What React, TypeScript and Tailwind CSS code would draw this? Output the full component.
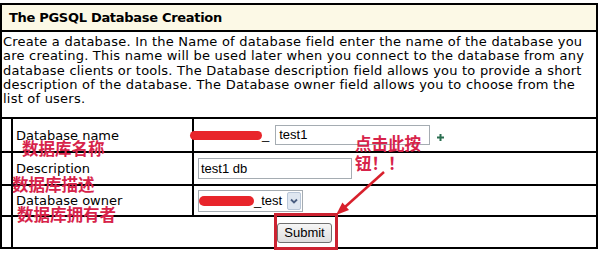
import React from "react";

const verdana = { fontFamily: '"DejaVu Sans", Verdana, sans-serif' };
const arial = { fontFamily: '"Liberation Sans", Arial, sans-serif' };
const cjk = { fontFamily: '"Noto Sans CJK SC", sans-serif' };

function Plus() {
  return (
    <svg width="7" height="7" viewBox="0 0 7 7" className="ml-[7px] mt-[4px]">
      <rect x="2.5" y="0" width="2" height="7" fill="#2a6e50" />
      <rect x="0" y="2.5" width="7" height="2" fill="#2a6e50" />
    </svg>
  );
}

export default function App() {
  return (
    <div className="relative w-[602px] h-[257px] bg-white overflow-hidden text-black">
      <div className="mt-[3px] w-[598px] border-2 border-black" style={verdana}>
        <div className="h-[27px] border-b-2 border-black bg-[#fcf9e6] flex items-center pl-[7px] text-[13px] font-bold tracking-[-0.3px]">
          The PGSQL Database Creation
        </div>
        <div className="h-[87px] border-b-2 border-black pl-px pt-[3px] text-[13px] leading-[14.3px] tracking-[0.22px] whitespace-nowrap">
          Create a database. In the Name of database field enter the name of the database you
          <br />
          are creating. This name will be used later when you connect to the database from any
          <br />
          database clients or tools. The Database description field allows you to provide a short
          <br />
          description of the database. The Database owner field allows you to choose from the
          <br />
          list of users.
        </div>

        <div className="flex h-[34px] border-b-2 border-black">
          <div className="w-[11px] shrink-0 border-r-2 border-black" />
          <div className="w-[181px] shrink-0 border-r-2 border-black flex items-center pl-[3px] pt-[2px] text-[13px]">
            Database name
          </div>
          <div className="flex-1 flex items-center" style={arial}>
            <span className="-ml-[4px] w-[72px] h-[9px] rounded-full bg-[#e8252b] inline-block" />
            <span className="text-[13px]">_</span>
            <div className="ml-[6px] w-[155px] h-[20px] border border-[#a5acb2] flex items-center pl-[3px] text-[13px]">
              test1
            </div>
            <Plus />
          </div>
        </div>

        <div className="flex h-[33px] border-b-2 border-black">
          <div className="w-[11px] shrink-0 border-r-2 border-black" />
          <div className="w-[181px] shrink-0 border-r-2 border-black flex items-center pl-[3px] text-[13px]">
            Description
          </div>
          <div className="flex-1 flex items-center" style={arial}>
            <div className="ml-[4px] w-[154px] h-[21px] border border-[#a5acb2] flex items-center pl-[2px] text-[13px]">
              test1 db
            </div>
          </div>
        </div>

        <div className="flex h-[31px] border-b-2 border-black">
          <div className="w-[11px] shrink-0 border-r-2 border-black" />
          <div className="w-[181px] shrink-0 border-r-2 border-black flex items-center pl-[3px] text-[13px]">
            Database owner
          </div>
          <div className="flex-1 flex items-center" style={arial}>
            <div className="ml-[4px] w-[105px] h-[22px] border border-[#a5acb2] flex items-center text-[13px]">
              <span className="w-[55px] h-[10px] rounded-full bg-[#e8252b] inline-block" />
              <span>_test</span>
              <span className="ml-auto mr-px w-[14px] h-[18px] bg-[#dfe7f1] border border-[#b8c6d8] rounded-[2px] flex items-center justify-center">
                <svg width="8" height="6" viewBox="0 0 8 6">
                  <path d="M1 1.5 L4 4.5 L7 1.5" stroke="#4b5f82" strokeWidth="1.8" fill="none" />
                </svg>
              </span>
            </div>
          </div>
        </div>

        <div className="flex h-[30px]">
          <div className="w-[11px] shrink-0 border-r-2 border-black" />
          <div className="flex-1 flex items-center justify-center" style={arial}>
            <div className="relative">
              <button className="w-[55px] h-[20px] border border-[#707070] rounded-[3px] bg-gradient-to-b from-[#f6f6f6] to-[#dedede] text-[13px] leading-none">
                Submit
              </button>
              <div className="absolute -left-[3px] -right-[6px] -top-[7px] -bottom-[6px] border-[3px] border-[#cc2231] pointer-events-none" />
            </div>
          </div>
        </div>
      </div>

      <div className="absolute left-[22px] top-[140px] text-[16.5px] leading-none font-bold text-[#d7234a] whitespace-nowrap" style={cjk}>数据库名称</div>
      <div className="absolute left-[12px] top-[176px] text-[16.5px] leading-none font-bold text-[#d7234a] whitespace-nowrap" style={cjk}>数据库描述</div>
      <div className="absolute left-[17px] top-[206px] text-[16.5px] leading-none font-bold text-[#d7234a] whitespace-nowrap" style={cjk}>数据库拥有者</div>
      <div className="absolute left-[355px] top-[135px] text-[16.5px] leading-none font-bold text-[#d7234a] whitespace-nowrap" style={cjk}>点击此按</div>
      <div className="absolute left-[355px] top-[155px] text-[16.5px] leading-none font-bold text-[#d7234a] whitespace-nowrap" style={cjk}>钮！！</div>

      <svg className="absolute left-0 top-0 pointer-events-none" width="602" height="257">
        <line x1="384" y1="172" x2="345" y2="207" stroke="#d8202c" strokeWidth="2.5" />
        <polygon points="336,215 349,210 342.4,202.6" fill="#d8202c" />
      </svg>
    </div>
  );
}
